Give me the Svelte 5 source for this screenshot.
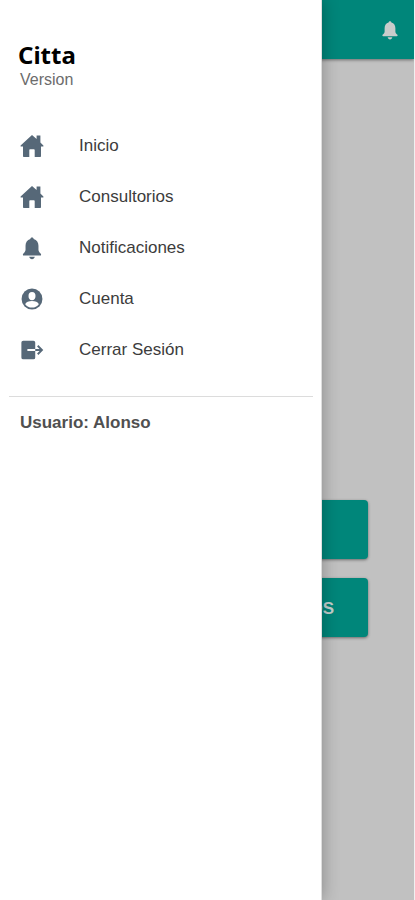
<script>
  const user = 'Alonso';
  const items = [
    { label: 'Inicio', icon: 'home' },
    { label: 'Consultorios', icon: 'home' },
    { label: 'Notificaciones', icon: 'bell' },
    { label: 'Cuenta', icon: 'account' },
    { label: 'Cerrar Sesión', icon: 'exit' }
  ];
</script>

{#snippet icon(name)}
  <svg class="icon" viewBox={name === 'home' ? '0 0 24 24' : '-1 -1 26 26'} aria-hidden="true">
    {#if name === 'home'}
      <path d="M12 1 L0.6 11.4 Q0.2 12.6 1.4 12.6 H3 V22.2 Q3 23 3.8 23 H9.3 V16 Q9.3 15.2 10.1 15.2 H13.9 Q14.7 15.2 14.7 16 V23 H20.2 Q21 23 21 22.2 V12.6 H22.6 Q23.8 12.6 23.4 11.4 L20.4 8.6 V1.6 H16.6 V5.1 Z" />
    {:else if name === 'bell'}
      <path d="M12 0.5 C10.9 0.5 10.2 1.2 10.2 2.3 C6.7 3.1 5 6 5 9.6 V14 C5 15.8 3.9 16.8 2.7 18 C1.7 19 2 20.2 3.2 20.2 H20.8 C22 20.2 22.3 19 21.3 18 C20.1 16.8 19 15.8 19 14 V9.6 C19 6 17.3 3.1 13.8 2.3 C13.8 1.2 13.1 0.5 12 0.5 Z" />
      <path d="M9 21.5 H15 C14.7 23.2 13.5 24.2 12 24.2 S9.3 23.2 9 21.5 Z" />
    {:else if name === 'account'}
      <circle cx="12" cy="12" r="11.3" />
      <ellipse class="cut" cx="12" cy="8.8" rx="3.8" ry="4.5" />
      <path class="cut" d="M4.6 17.6 C5.4 15.3 8.6 14.3 12 14.3 S18.6 15.3 19.4 17.6 C17.6 20 15 21.3 12 21.3 S6.4 20 4.6 17.6 Z" />
    {:else}
      <path d="M2 2 H13.5 Q15.5 2 15.5 4 V10.8 H7 V13.2 H15.5 V20 Q15.5 22 13.5 22 H2.5 Q0.5 22 0.5 20 V4 Q0.5 2 2.5 2 Z" />
      <path class="line" d="M15.5 12 H22.6 M18.2 7.4 L22.8 12 L18.2 16.6" />
    {/if}
  </svg>
{/snippet}

<div class="app">
  <header>
    <button class="alerts" aria-label="Notificaciones">{@render icon('bell')}</button>
  </header>
  <main>
    <button class="action">INICIO</button>
    <button class="action">MIS CONSULTORIOS</button>
  </main>

  <aside>
    <div class="brand">
      <h1>Citta</h1>
      <p>Version</p>
    </div>
    <nav>
      {#each items as item}
        <a href="#menu">{@render icon(item.icon)}<span>{item.label}</span></a>
      {/each}
    </nav>
    <hr />
    <p class="user">Usuario: {user}</p>
  </aside>
</div>

<style>
  :global(body) {
    margin: 0;
  }
  .app {
    position: relative;
    box-sizing: border-box;
    min-height: 100vh;
    overflow: hidden;
    border-right: 1px solid #f0f0f0;
    background: #c1c1c1;
    font-family: "Liberation Sans", Arial, sans-serif;
  }
  header {
    display: flex;
    align-items: center;
    justify-content: flex-end;
    height: 59px;
    padding-right: 14px;
    background: #00867a;
    box-shadow: 0 1px 3px rgba(0, 0, 0, 0.45);
  }
  .alerts {
    display: flex;
    padding: 0;
    border: 0;
    background: none;
    color: #c9cccb;
  }
  .alerts .icon {
    width: 20px;
    height: 20px;
  }
  main {
    display: flex;
    flex-direction: column;
    gap: 19px;
    padding: 441px 46px 0;
  }
  .action {
    height: 59px;
    padding: 2px 34px 0;
    border: 0;
    border-radius: 4px;
    background: #00867a;
    box-shadow: 0 1px 3px rgba(0, 0, 0, 0.45);
    color: #c4cfcd;
    font: bold 17px "Liberation Sans", Arial, sans-serif;
    text-align: right;
  }
  .action:first-child {
    text-align: center;
  }
  aside {
    position: absolute;
    top: 0;
    bottom: 0;
    left: 0;
    box-sizing: border-box;
    width: 322px;
    max-width: 85%;
    padding-top: 40px;
    border-right: 1px solid #dedede;
    background: #fff;
    box-shadow: 0 0 16px rgba(0, 0, 0, 0.3);
  }
  .brand {
    padding: 0 18px;
  }
  h1 {
    margin: 0;
    color: #000;
    font: bold 24px/30px "Noto Sans", "Open Sans", sans-serif;
  }
  .brand p {
    margin: 0;
    padding-left: 2px;
    color: #6c6c6c;
    font-size: 16px;
    line-height: 20px;
  }
  nav {
    padding: 30px 20px 21px;
  }
  nav a {
    display: flex;
    align-items: center;
    gap: 35px;
    height: 51px;
    color: #3c3c3c;
    font-size: 17px;
    line-height: 20px;
    text-decoration: none;
  }
  .icon {
    width: 24px;
    height: 24px;
    flex: none;
    fill: currentColor;
  }
  nav .icon {
    color: #566878;
  }
  .cut {
    fill: #fff;
  }
  .line {
    fill: none;
    stroke: currentColor;
    stroke-width: 2;
  }
  hr {
    height: 1px;
    margin: 0 8px 0 9px;
    border: 0;
    background: #dcdcdc;
  }
  .user {
    margin: 16px 20px;
    color: #505050;
    font-size: 17px;
    font-weight: bold;
    line-height: 20px;
  }
</style>
